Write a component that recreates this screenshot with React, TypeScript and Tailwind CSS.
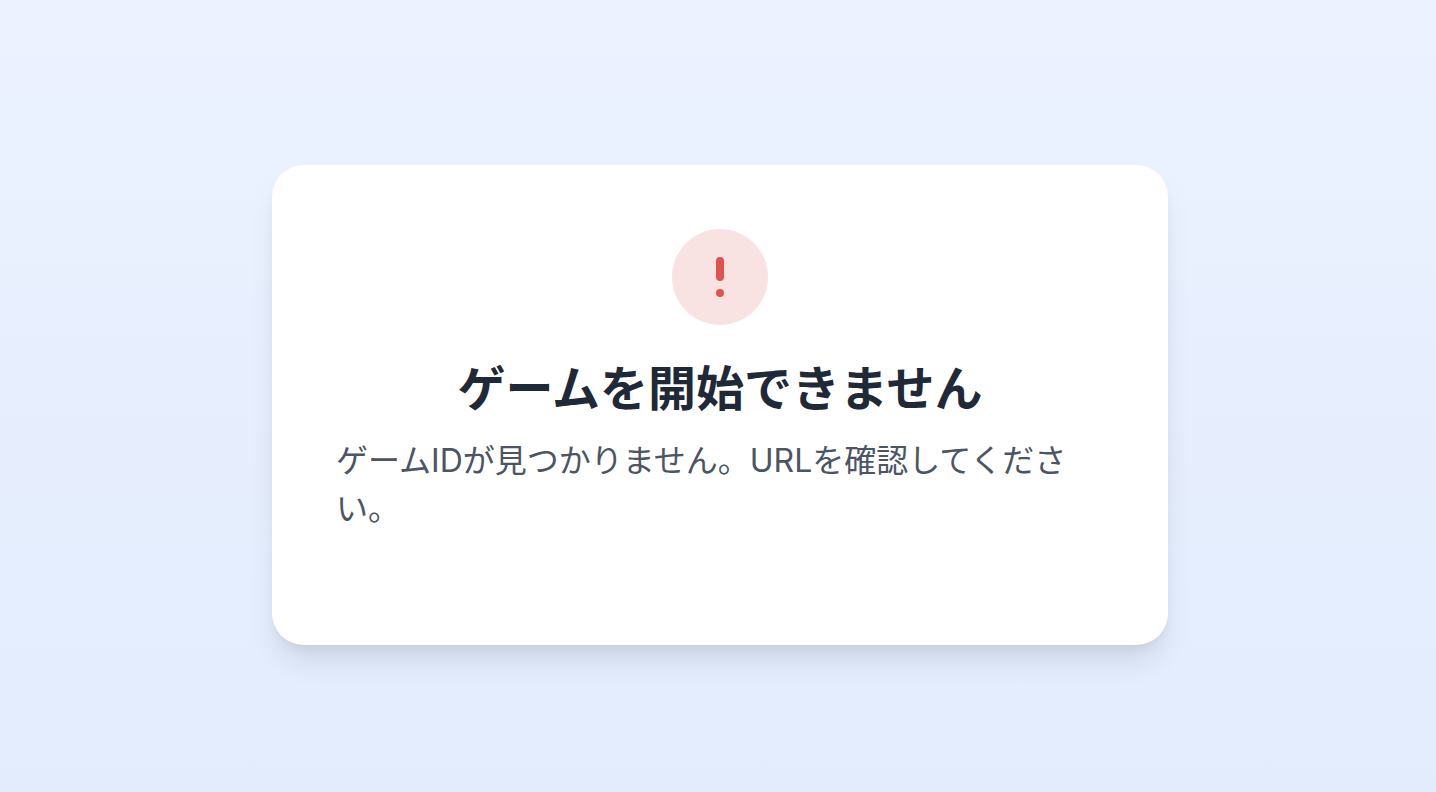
export default function App() {
  return (
    <main className="flex min-h-screen flex-col items-center justify-center bg-linear-to-b from-[#ecf2ff] to-[#e2ecfd] pt-[18px] pl-1 [font-family:'Inter','Noto_Sans_CJK_JP',sans-serif]">
      <section className="flex w-full max-w-4xl flex-col items-center rounded-4xl bg-white px-16 pt-16 pb-28 shadow-[0_20px_30px_-6px_rgba(0,0,0,0.1),0_8px_12px_-4px_rgba(0,0,0,0.05)]">
        <div className="mb-8 flex size-24 items-center justify-center rounded-full bg-[#f9e2e2]">
          <svg viewBox="0 0 48 48" className="size-12" fill="none" stroke="#e0524f" strokeWidth="8" strokeLinecap="round" aria-hidden="true">
            <path d="M24 8v16M24 40v0" />
          </svg>
        </div>
        <h1 className="mb-4 text-5xl leading-[64px] font-bold text-[#1f2937]">ゲームを開始できません</h1>
        <p className="w-full text-[32px] leading-[48px] text-[#4b5563]">ゲームIDが見つかりません。URLを確認してください。</p>
      </section>
    </main>
  );
}
